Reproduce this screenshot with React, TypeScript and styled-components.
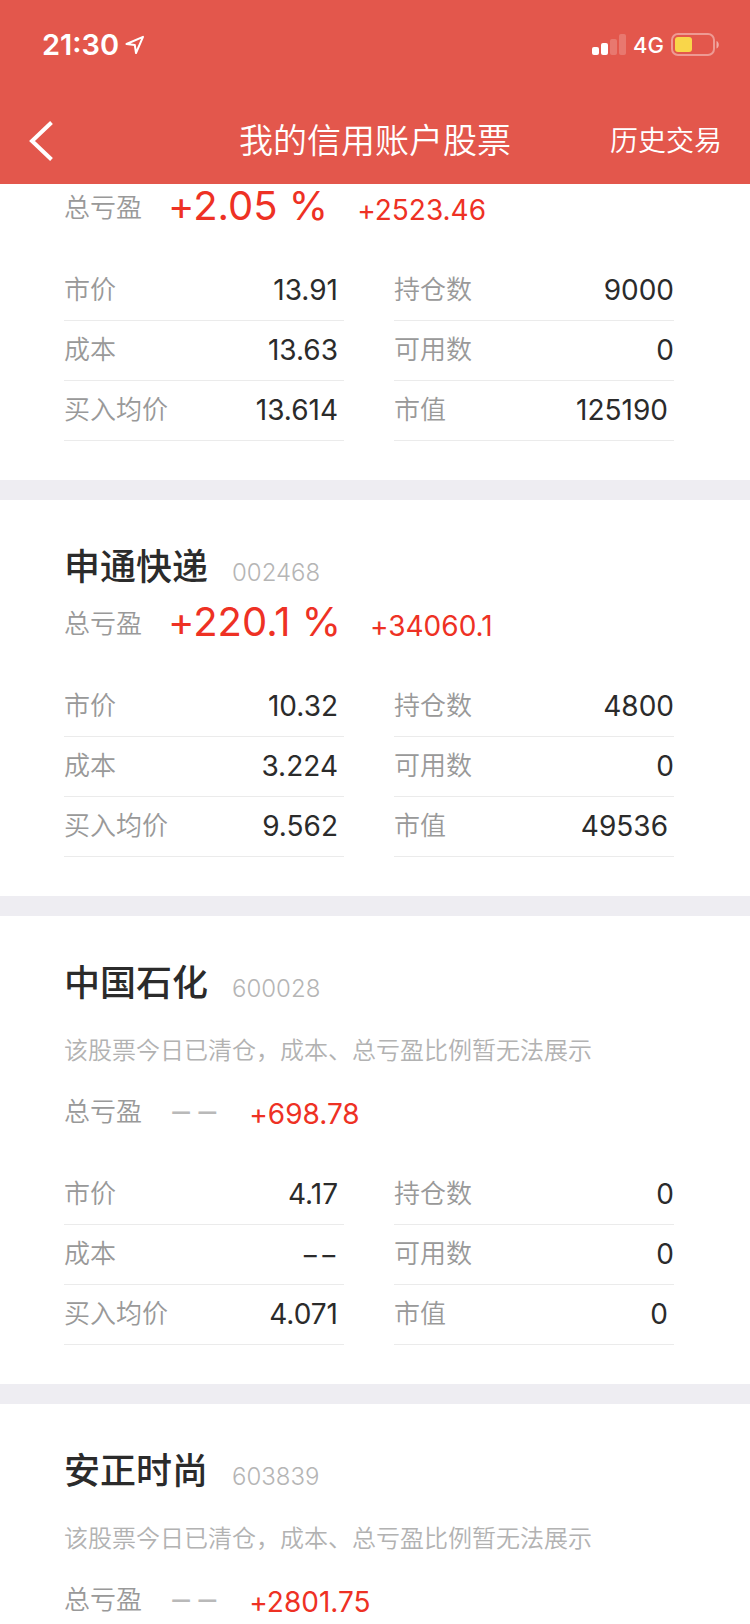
import React from "react";
import styled, { createGlobalStyle } from "styled-components";

const GlobalStyle = createGlobalStyle`
  * { box-sizing: border-box; }
  body {
    margin: 0;
    background: #fff;
    color: #2b2b2b;
    font-family: Inter, "Noto Sans CJK SC", sans-serif;
    font-variant-ligatures: no-contextual;
  }
`;

const Page = styled.div`
  min-height: 100vh;
  background: #fff;
`;

const Header = styled.header`
  position: sticky;
  top: 0;
  z-index: 1;
  background: #e3574c;
  color: #fff;
`;

const StatusBar = styled.div`
  display: flex;
  align-items: center;
  justify-content: space-between;
  height: 90px;
  padding: 0 30px 0 42px;
`;

const StatusGroup = styled.div<{ $gap: number }>`
  display: flex;
  align-items: center;
  gap: ${(p) => p.$gap}px;
`;

const Clock = styled.span`
  font-size: 29px;
  line-height: 36px;
  font-weight: 600;
  font-variant-ligatures: normal;
`;

const Network = styled.span`
  font-size: 22px;
  line-height: 28px;
  font-weight: 500;
`;

const NavBar = styled.div`
  display: grid;
  grid-template-columns: 1fr auto 1fr;
  align-items: center;
  height: 94px;
  padding: 8px 28px 0 20px;
`;

const BackButton = styled.button`
  display: flex;
  justify-self: start;
  padding: 8px;
  border: 0;
  background: none;
  color: inherit;
`;

const Title = styled.h1`
  margin: 0 0 0 8px;
  font-size: 34px;
  line-height: 44px;
  font-weight: 350;
`;

const HistoryLink = styled.a`
  justify-self: end;
  color: inherit;
  font-size: 28px;
  line-height: 44px;
  font-weight: 350;
  text-decoration: none;
`;

const List = styled.main`
  margin-top: -8px;
`;

const Card = styled.section<{ $first: boolean }>`
  padding: ${(p) => (p.$first ? 0 : 41)}px 76px 39px 64px;
  border-top: ${(p) => (p.$first ? 0 : 20)}px solid #eeedf2;
`;

const CardHead = styled.div`
  display: flex;
  align-items: flex-start;
  gap: 24px;
  height: 51px;
`;

const StockName = styled.h2`
  margin: 0;
  font-size: 36px;
  line-height: 52px;
  font-weight: 500;
`;

const Code = styled.span`
  color: #b5b5b5;
  font-size: 24px;
  line-height: 64px;
  font-weight: 300;
`;

const Note = styled.p`
  height: 72px;
  margin: 0;
  padding-top: 25px;
  color: #b2b2b2;
  font-size: 24px;
  line-height: 36px;
  font-weight: 350;
`;

const Total = styled.div`
  display: flex;
  align-items: baseline;
  height: 65px;
  line-height: 60px;
`;

const Label = styled.span`
  align-self: flex-start;
  color: #999;
  font-size: 26px;
  line-height: 64px;
  font-weight: 350;
`;

const Percent = styled.span<{ $empty: boolean }>`
  margin: 0 29px 0 26px;
  color: ${(p) => (p.$empty ? "#b9b9b9" : "#ee3124")};
  font-size: 40px;
  font-weight: ${(p) => (p.$empty ? 300 : 400)};
`;

const Amount = styled.span`
  color: #ee3124;
  font-size: 28px;
  font-weight: 400;
`;

const Figures = styled.dl`
  display: grid;
  grid-template-columns: 1fr 1fr;
  column-gap: 50px;
  margin: 20px 0 0;
`;

const Figure = styled.div<{ $inset: boolean }>`
  display: flex;
  align-items: baseline;
  justify-content: space-between;
  height: 60px;
  padding-right: ${(p) => (p.$inset ? 6 : 0)}px;
  border-bottom: 1px solid #ebebeb;
  line-height: 59px;
`;

const Term = styled(Label).attrs({ as: "dt" })`
  line-height: 58px;
`;

const Value = styled.dd`
  margin: 0;
  color: #2b2b2b;
  font-size: 28px;
  font-weight: 400;
`;

interface Stock {
  name?: string;
  code?: string;
  cleared?: boolean;
  percent?: string;
  amount: string;
  figures?: string[];
}

const terms = ["市价", "持仓数", "成本", "可用数", "买入均价", "市值"];

const stocks: Stock[] = [
  {
    percent: "+2.05 %",
    amount: "+2523.46",
    figures: ["13.91", "9000", "13.63", "0", "13.614", "125190"],
  },
  {
    name: "申通快递",
    code: "002468",
    percent: "+220.1 %",
    amount: "+34060.1",
    figures: ["10.32", "4800", "3.224", "0", "9.562", "49536"],
  },
  {
    name: "中国石化",
    code: "600028",
    cleared: true,
    amount: "+698.78",
    figures: ["4.17", "0", "−−", "0", "4.071", "0"],
  },
  { name: "安正时尚", code: "603839", cleared: true, amount: "+2801.75" },
];

const LocationIcon = () => (
  <svg width="20" height="20" viewBox="0 0 20 20" fill="none" aria-hidden="true">
    <path d="M1.500 9 18 1.800 11 18 9.800 10Z" stroke="#fff" strokeWidth="2" strokeLinejoin="round" />
  </svg>
);

const SignalIcon = () => (
  <svg width="34" height="22" viewBox="0 0 34 22" fill="#fff" aria-hidden="true">
    <rect x="0" y="13" width="7" height="8" rx="2" />
    <rect x="9" y="9" width="7" height="12" rx="2" />
    <rect x="18" y="5" width="7" height="16" rx="2" opacity="0.2" />
    <rect x="27" y="0" width="7" height="21" rx="2" opacity="0.2" />
  </svg>
);

const BatteryIcon = () => (
  <svg width="49" height="24" viewBox="0 0 49 24" fill="none" aria-hidden="true">
    <rect x="1" y="1" width="42" height="21" rx="6" stroke="#fff" strokeOpacity="0.4" strokeWidth="2" />
    <rect x="4" y="4" width="17" height="15" rx="3" fill="#f9d64a" />
    <path d="M45.500 8v7.500c3-1 3-6.500 0-7.500Z" fill="#fff" fillOpacity="0.5" />
  </svg>
);

const BackIcon = () => (
  <svg width="26" height="40" viewBox="0 0 26 40" fill="none" aria-hidden="true">
    <path d="M23.500 1.500 4 20l19.500 18.500" stroke="#fff" strokeWidth="4" />
  </svg>
);

function StockCard({ stock, first }: { stock: Stock; first: boolean }) {
  return (
    <Card $first={first}>
      {stock.name && (
        <CardHead>
          <StockName>{stock.name}</StockName>
          <Code>{stock.code}</Code>
        </CardHead>
      )}
      {stock.cleared && <Note>该股票今日已清仓，成本、总亏盈比例暂无法展示</Note>}
      <Total>
        <Label>总亏盈</Label>
        <Percent $empty={!stock.percent}>{stock.percent ?? "−−"}</Percent>
        <Amount>{stock.amount}</Amount>
      </Total>
      {stock.figures && (
        <Figures>
          {stock.figures.map((value, i) => (
            <Figure key={terms[i]} $inset={i % 2 === 0 || i === 5}>
              <Term>{terms[i]}</Term>
              <Value>{value}</Value>
            </Figure>
          ))}
        </Figures>
      )}
    </Card>
  );
}

export default function App() {
  return (
    <Page lang="zh-CN">
      <GlobalStyle />
      <Header>
        <StatusBar>
          <StatusGroup $gap={6}>
            <Clock>21:30</Clock>
            <LocationIcon />
          </StatusGroup>
          <StatusGroup $gap={7}>
            <SignalIcon />
            <Network>4G</Network>
            <BatteryIcon />
          </StatusGroup>
        </StatusBar>
        <NavBar>
          <BackButton type="button" aria-label="返回">
            <BackIcon />
          </BackButton>
          <Title>我的信用账户股票</Title>
          <HistoryLink href="#history">历史交易</HistoryLink>
        </NavBar>
      </Header>
      <List>
        {stocks.map((stock, i) => (
          <StockCard key={stock.amount} stock={stock} first={i === 0} />
        ))}
      </List>
    </Page>
  );
}
